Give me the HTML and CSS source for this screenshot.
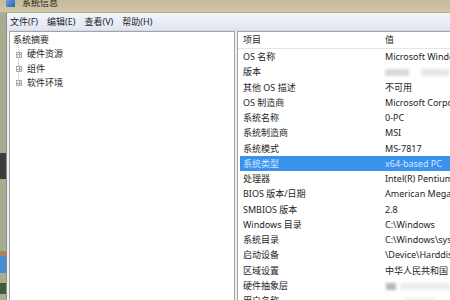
FILE: index.html
```html
<!DOCTYPE html>
<html lang="zh-CN">
<head>
  <meta charset="UTF-8" />
  <title>系统信息</title>
  <link rel="stylesheet" href="styles.css">
</head>
<body>
  <div class="titlebar">
    <span class="app-icon"></span>
    <span class="title">系统信息</span>
  </div>
  <div class="frame">
    <div class="desktop-edge"></div>
    <div class="window">
      <div class="menubar">
        <span>文件(F)</span>
        <span>编辑(E)</span>
        <span>查看(V)</span>
        <span>帮助(H)</span>
      </div>
      <div class="panes">
        <div class="tree">
          <div class="tree-root">系统摘要</div>
          <div class="tree-children">
            <div class="tree-item"><span class="plus"></span>硬件资源</div>
            <div class="tree-item"><span class="plus"></span>组件</div>
            <div class="tree-item"><span class="plus"></span>软件环境</div>
          </div>
        </div>
        <div class="splitter"></div>
        <div class="list">
          <div class="row head"><span>项目</span><span>值</span></div>
          <div class="row"><span>OS 名称</span><span>Microsoft Windows 7 旗舰版</span></div>
          <div class="row"><span>版本</span><span><i class="blur b1"></i><i class="blur b2"></i></span></div>
          <div class="row"><span>其他 OS 描述</span><span>不可用</span></div>
          <div class="row"><span>OS 制造商</span><span>Microsoft Corporation</span></div>
          <div class="row"><span>系统名称</span><span>0-PC</span></div>
          <div class="row"><span>系统制造商</span><span>MSI</span></div>
          <div class="row"><span>系统模式</span><span>MS-7817</span></div>
          <div class="row selected"><span>系统类型</span><span>x64-based PC</span></div>
          <div class="row"><span>处理器</span><span>Intel(R) Pentium(R) CPU</span></div>
          <div class="row"><span>BIOS 版本/日期</span><span>American Megatrends Inc.</span></div>
          <div class="row"><span>SMBIOS 版本</span><span>2.8</span></div>
          <div class="row"><span>Windows 目录</span><span>C:\Windows</span></div>
          <div class="row"><span>系统目录</span><span>C:\Windows\system32</span></div>
          <div class="row"><span>启动设备</span><span>\Device\HarddiskVolume1</span></div>
          <div class="row"><span>区域设置</span><span>中华人民共和国</span></div>
          <div class="row"><span>硬件抽象层</span><span><i class="blur b3"></i><i class="blur b4"></i></span></div>
          <div class="row"><span>用户名称</span><span><i class="blur b5"></i></span></div>
        </div>
      </div>
    </div>
  </div>
</body>
</html>
```

FILE: styles.css
```css
* { margin: 0; padding: 0; box-sizing: border-box; }
html, body {
  width: 450px;
  height: 300px;
  overflow: hidden;
}
body {
  font-family: "Noto Sans", "Noto Sans CJK SC", sans-serif;
  font-size: 9px;
  color: #1e1e1e;
  background: #a8ad8f;
  display: flex;
  flex-direction: column;
}
.titlebar {
  height: 13px;
  flex: none;
  background: linear-gradient(#c6bb9a, #cfc6a8);
  display: flex;
  align-items: flex-end;
  padding: 0 0 5px 6px;
  overflow: hidden;
  border-bottom: 1px solid #b8ae90;
}
.app-icon {
  width: 9px;
  height: 8px;
  margin-right: 7px;
  background: linear-gradient(135deg, #6fa4e0, #2a5fae);
  border-radius: 1px;
}
.title {
  line-height: 9px;
  color: #222;
}
.frame {
  flex: 1;
  display: flex;
  min-height: 0;
}
.desktop-edge {
  width: 6px;
  flex: none;
  background: linear-gradient(to bottom,
    #a8ad8f 0 140px, #3b3d3a 140px 166px, #a8ad8f 166px 238px,
    #b0805a 238px 243px, #4a8cd0 243px 260px, #a8ad8f 260px 270px,
    #3f5a3c 270px 281px, #a8ad8f 281px);
}
.window {
  flex: 1;
  display: flex;
  flex-direction: column;
  border-left: 1px solid #8d8d8d;
  background: #f0f0f0;
  min-width: 0;
}
.menubar {
  height: 18px;
  flex: none;
  display: flex;
  align-items: center;
  gap: 9px;
  padding-left: 3px;
  background: linear-gradient(#f3f5fb, #dfe6f3);
  border-bottom: 1px solid #d4dae6;
}
.panes {
  flex: 1;
  display: flex;
  padding-left: 2px;
  min-height: 0;
}
.tree {
  width: 226px;
  flex: none;
  background: #fff;
  border: 1px solid #a4a4a4;
  border-bottom: none;
  padding: 1px 0 0 3px;
  line-height: 14.4px;
}
.tree-children {
  position: relative;
}
.tree-children::before {
  content: "";
  position: absolute;
  left: 5px;
  top: -5px;
  height: 40px;
  border-left: 1px dotted #b4b4b4;
}
.tree-item {
  display: flex;
  align-items: center;
  padding-left: 3px;
  gap: 5px;
}
.plus {
  position: relative;
  width: 6px;
  height: 6px;
  border: 1px solid #a9a9a9;
  background: linear-gradient(#a0a0a0, #a0a0a0) center / 4px 1px no-repeat,
              linear-gradient(#a0a0a0, #a0a0a0) center / 1px 4px no-repeat,
              #fbfbfb;
}
.splitter {
  width: 2px;
  flex: none;
}
.list {
  flex: 1;
  background: #fff;
  border: 1px solid #a4a4a4;
  border-right: none;
  border-bottom: none;
  padding-left: 2px;
  overflow: hidden;
  min-width: 0;
}
.row {
  display: grid;
  grid-template-columns: 142px 1fr;
  height: 15.27px;
  line-height: 15.27px;
  white-space: nowrap;
}
.row span {
  padding-left: 3px;
  overflow: hidden;
}
.row.head {
  height: 17px;
  line-height: 16px;
  border-bottom: 1px solid #e3e6ea;
  margin-left: -2px;
  padding-left: 2px;
}
.row.selected {
  background: #3a92ec;
  color: #d4e9ff;
}
.blur {
  display: inline-block;
  vertical-align: middle;
  height: 7px;
  background: #d8d8d8;
  filter: blur(1.5px);
}
.b1 { width: 24px; }
.b2 { width: 28px; margin-left: 12px; background: #e6e6e6; }
.b3 { width: 10px; background: #b6b6b6; margin-left: 1px; }
.b4 { width: 50px; margin-left: 4px; background: #ececec; }
.b5 { width: 30px; margin-left: 20px; background: #eeeeee; }
```
